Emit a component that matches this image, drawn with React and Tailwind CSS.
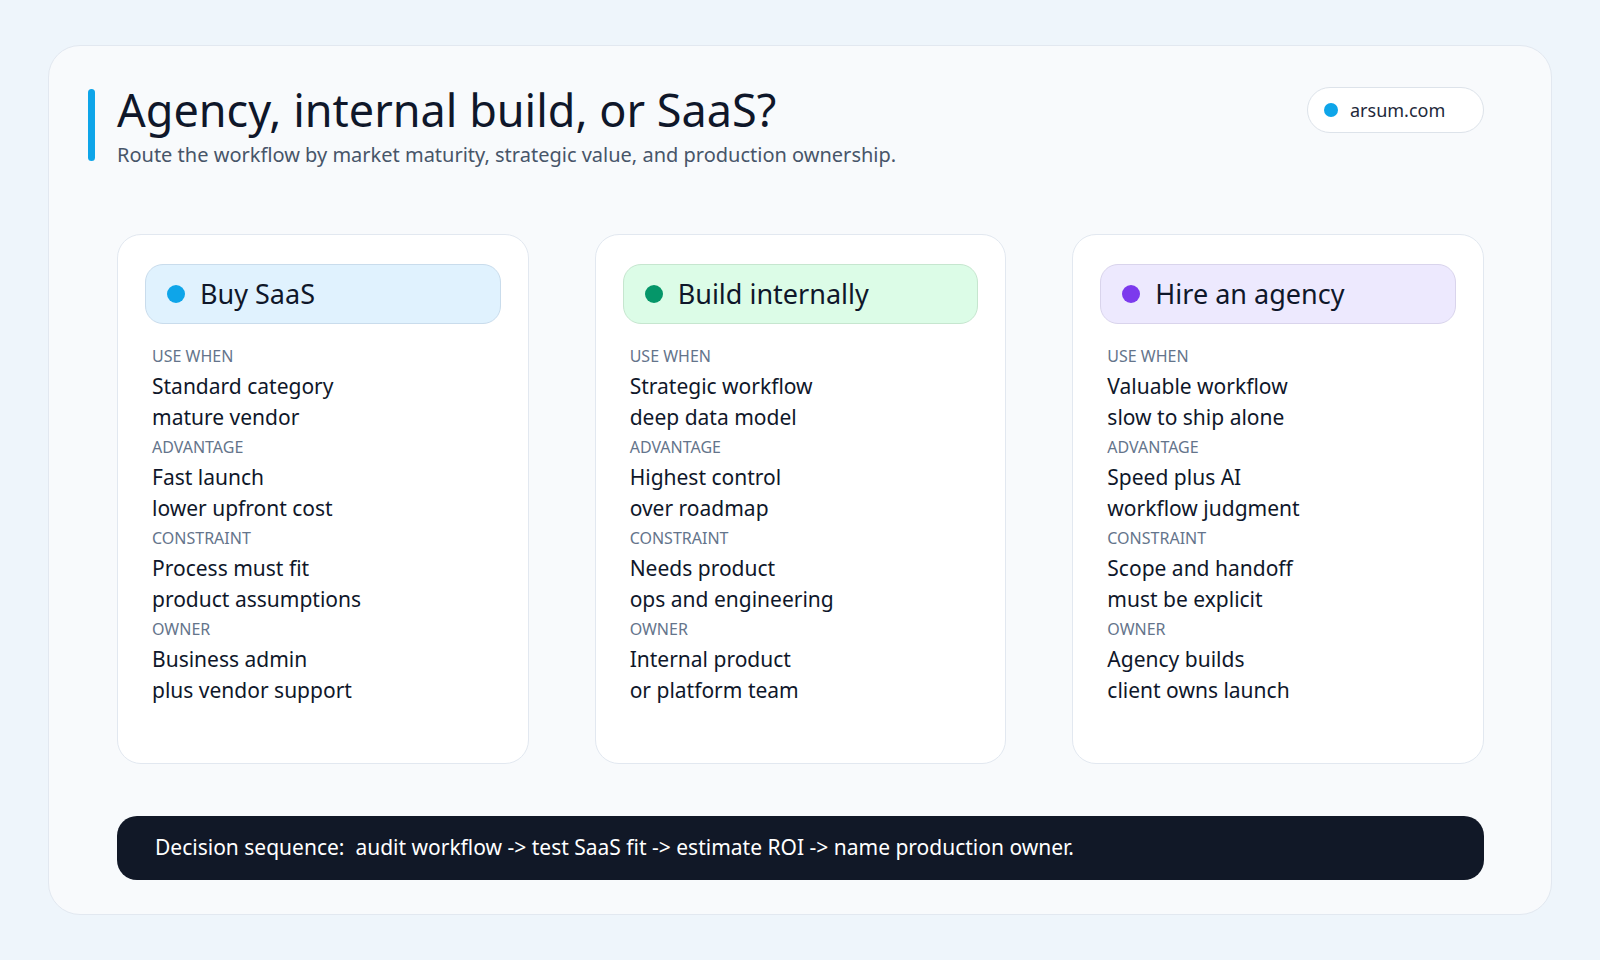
const columns = [
  {
    title: 'Buy SaaS',
    dot: 'bg-[#0ea5e9]',
    head: 'bg-[#e0f2fe] border-[#c9dcec]',
    rows: [
      ['USE WHEN', 'Standard category', 'mature vendor'],
      ['ADVANTAGE', 'Fast launch', 'lower upfront cost'],
      ['CONSTRAINT', 'Process must fit', 'product assumptions'],
      ['OWNER', 'Business admin', 'plus vendor support'],
    ],
  },
  {
    title: 'Build internally',
    dot: 'bg-[#059669]',
    head: 'bg-[#dcfce7] border-[#c6e6cf]',
    rows: [
      ['USE WHEN', 'Strategic workflow', 'deep data model'],
      ['ADVANTAGE', 'Highest control', 'over roadmap'],
      ['CONSTRAINT', 'Needs product', 'ops and engineering'],
      ['OWNER', 'Internal product', 'or platform team'],
    ],
  },
  {
    title: 'Hire an agency',
    dot: 'bg-[#7c3aed]',
    head: 'bg-[#ede9fe] border-[#d9d4ec]',
    rows: [
      ['USE WHEN', 'Valuable workflow', 'slow to ship alone'],
      ['ADVANTAGE', 'Speed plus AI', 'workflow judgment'],
      ['CONSTRAINT', 'Scope and handoff', 'must be explicit'],
      ['OWNER', 'Agency builds', 'client owns launch'],
    ],
  },
];

export default function App() {
  return (
    <div className="w-[1600px] h-[960px] bg-[#eef5fb] pt-[45px] px-[48px] font-['Liberation_Sans',Arial,sans-serif]">
      <div className="h-[870px] rounded-[32px] bg-[#f8fafc] border border-[#e2e8f0] pl-[39px] pr-[67px] pt-[38px]">
        <div className="flex items-start justify-between">
          <div className="flex gap-[22px]">
            <div className="w-[7px] h-[72px] mt-[5px] rounded-full bg-[#0ea5e9]" />
            <div>
              <h1 className="text-[45px] leading-[52px] text-[#0f172a]">Agency, internal build, or SaaS?</h1>
              <p className="text-[20px] leading-[28px] mt-[5px] text-[#475569]">
                Route the workflow by market maturity, strategic value, and production ownership.
              </p>
            </div>
          </div>
          <div className="mt-[3px] w-[177px] h-[46px] rounded-full bg-white border border-[#dde3ea] flex items-center pl-[16px] gap-[12px]">
            <span className="w-[14px] h-[14px] rounded-full bg-[#0ea5e9]" />
            <span className="text-[18px] text-[#1e293b]">arsum.com</span>
          </div>
        </div>

        <div className="ml-[29px] mt-[65px] grid grid-cols-3 gap-[66px]">
          {columns.map((c) => (
            <div key={c.title} className="h-[530px] rounded-[24px] bg-white border border-[#e2e8f0] px-[27px] pt-[29px]">
              <div className={`h-[60px] rounded-[18px] border flex items-center pl-[21px] gap-[15px] ${c.head}`}>
                <span className={`w-[18px] h-[18px] rounded-full ${c.dot}`} />
                <span className="text-[27px] text-[#0f172a]">{c.title}</span>
              </div>
              <div className="mt-[20px] pl-[7px]">
                {c.rows.map(([label, a, b]) => (
                  <div key={label} className="mb-[2px]">
                    <div className="text-[16px] leading-[24px] text-[#64748b]">{label}</div>
                    <div className="text-[21px] leading-[31px] text-[#0f172a] mt-[3px]">{a}</div>
                    <div className="text-[21px] leading-[31px] text-[#0f172a]">{b}</div>
                  </div>
                ))}
              </div>
            </div>
          ))}
        </div>

        <div className="ml-[29px] mt-[52px] h-[64px] rounded-[20px] bg-[#111827] flex items-center pl-[38px] text-[21px] text-white whitespace-pre">
          Decision sequence:  audit workflow -&gt; test SaaS fit -&gt; estimate ROI -&gt; name production owner.
        </div>
      </div>
    </div>
  );
}
